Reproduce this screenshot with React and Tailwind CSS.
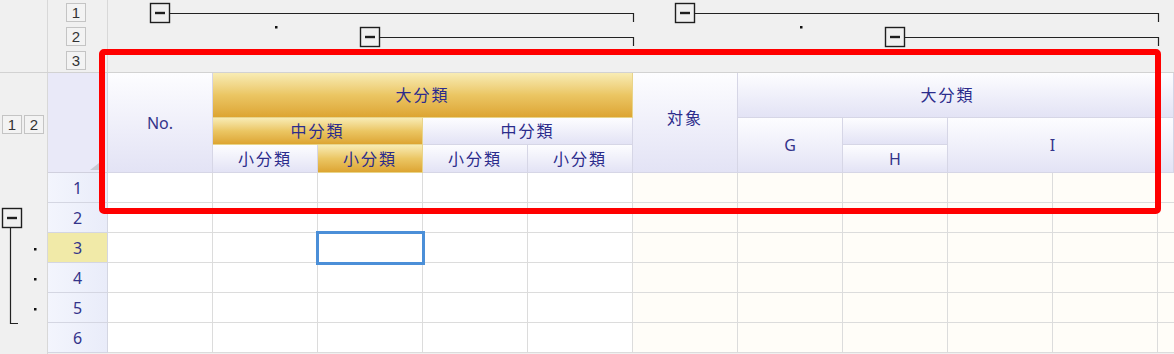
const font = { fontFamily: '"Noto Sans", "Noto Sans CJK JP", sans-serif' };

const lav = "bg-linear-to-b from-[#fdfdff] to-[#e3e3f5]";
const gold = "bg-linear-to-b from-[#f8ecb4] via-[#ebc663] to-[#dda531]";
const jp = "text-[16px] tracking-[2px] text-[#2c2c8c]";
const latin = "text-[16px] text-[#34348a]";

const LevelButton = ({ n }) => (
  <div className="w-[20px] h-[19px] border border-[#c4c4c4] bg-[#f3f3f3] flex items-center justify-center text-[15px] text-[#333] leading-none font-['Liberation_Sans']">
    {n}
  </div>
);

const MinusBox = ({ x, y }) => (
  <g>
    <rect x={x + 0.5} y={y + 0.5} width="19" height="19" fill="none" stroke="#1e1e1e" strokeWidth="1.4" />
    <line x1={x + 5} y1={y + 10} x2={x + 15} y2={y + 10} stroke="#1e1e1e" strokeWidth="2.4" />
  </g>
);

const ColumnOutline = () => (
  <svg width="1066" height="72" className="block">
    <MinusBox x={42} y={3} />
    <path d="M62 13.5 H525.5 V22" fill="none" stroke="#222" strokeWidth="1.2" />
    <rect x="167" y="26" width="2.5" height="2.5" fill="#111" />
    <MinusBox x={252} y={27} />
    <path d="M272 37.5 H525.5 V46" fill="none" stroke="#222" strokeWidth="1.2" />
    <MinusBox x={567} y={3} />
    <path d="M587 13.5 H1050.5 V22" fill="none" stroke="#222" strokeWidth="1.2" />
    <rect x="692" y="26" width="2.5" height="2.5" fill="#111" />
    <MinusBox x={777} y={27} />
    <path d="M797 37.5 H1050.5 V46" fill="none" stroke="#222" strokeWidth="1.2" />
  </svg>
);

const RowOutline = () => (
  <svg width="47" height="181" className="block">
    <MinusBox x={2} y={35} />
    <path d="M10.5 55 V150.5 H18" fill="none" stroke="#222" strokeWidth="1.2" />
    <rect x="34" y="75" width="2.5" height="2.5" fill="#111" />
    <rect x="34" y="105" width="2.5" height="2.5" fill="#111" />
    <rect x="34" y="135" width="2.5" height="2.5" fill="#111" />
  </svg>
);

const Head = ({ className, children }) => (
  <div className={`flex items-center justify-center border-r border-b border-[#d6d6e6] ${className}`}>
    {children}
  </div>
);

const rows = [1, 2, 3, 4, 5, 6];
const cols = [0, 1, 2, 3, 4, 5, 6, 7, 8, 9];

export default function App() {
  return (
    <div className="relative w-[1174px] h-[354px] overflow-hidden bg-[#f0f0f0]" style={font}>
      {/* column outline band */}
      <div className="flex h-[73px] border-b border-[#d2d2d2]">
        <div className="w-[48px] border-r border-[#d8d8d8]" />
        <div className="w-[60px] border-r border-[#d8d8d8] flex flex-col gap-[5px] pt-[3px] pl-[18px]">
          <LevelButton n="1" />
          <LevelButton n="2" />
          <LevelButton n="3" />
        </div>
        <ColumnOutline />
      </div>

      <div className="flex">
        {/* row outline */}
        <div className="w-[48px] border-r border-[#d8d8d8] flex flex-col">
          <div className="h-[100px] flex gap-[2px] pl-[2px] pt-[42px]">
            <LevelButton n="1" />
            <LevelButton n="2" />
          </div>
          <RowOutline />
        </div>

        <div className="flex-1 flex flex-col">
          {/* header */}
          <div className="flex h-[100px]">
            <div className="relative w-[60px] bg-[#e9e9f8] border-r border-b border-[#d0d0de]">
              <div className="absolute right-[8px] bottom-[2px] w-0 h-0 border-l-[9px] border-l-transparent border-b-[7px] border-b-[#c9c9d3]" />
            </div>
            <div className="flex-1 grid grid-cols-[repeat(10,105px)_1fr] grid-rows-[45px_27px_28px]">
              <Head className={`col-start-1 row-start-1 row-span-3 ${lav}`}>
                <span className={latin}>No.</span>
              </Head>
              <Head className={`col-start-2 col-span-4 row-start-1 border-[#e8d48a] ${gold}`}>
                <span className={jp}>大分類</span>
              </Head>
              <Head className={`col-start-2 col-span-2 row-start-2 border-[#e8d48a] ${gold}`}>
                <span className={jp}>中分類</span>
              </Head>
              <Head className={`col-start-4 col-span-2 row-start-2 ${lav}`}>
                <span className={jp}>中分類</span>
              </Head>
              <Head className={`col-start-2 row-start-3 ${lav}`}>
                <span className={jp}>小分類</span>
              </Head>
              <Head className={`col-start-3 row-start-3 border-[#e8d48a] ${gold}`}>
                <span className={jp}>小分類</span>
              </Head>
              <Head className={`col-start-4 row-start-3 ${lav}`}>
                <span className={jp}>小分類</span>
              </Head>
              <Head className={`col-start-5 row-start-3 ${lav}`}>
                <span className={jp}>小分類</span>
              </Head>
              <Head className={`col-start-6 row-start-1 row-span-3 items-start pt-[33px] ${lav}`}>
                <span className={jp}>対象</span>
              </Head>
              <Head className={`col-start-7 col-span-4 row-start-1 ${lav}`}>
                <span className={jp}>大分類</span>
              </Head>
              <Head className={`col-start-7 row-start-2 row-span-2 ${lav}`}>
                <span className={latin}>G</span>
              </Head>
              <Head className={`col-start-8 row-start-2 ${lav}`} />
              <Head className={`col-start-8 row-start-3 ${lav}`}>
                <span className={latin}>H</span>
              </Head>
              <Head className={`col-start-9 col-span-2 row-start-2 row-span-2 ${lav}`}>
                <span className={latin}>I</span>
              </Head>
              <Head className={`col-start-11 row-start-1 ${lav}`} />
              <Head className={`col-start-11 row-start-2 row-span-2 ${lav}`} />
            </div>
          </div>

          {/* data rows */}
          {rows.map((r) => (
            <div key={r} className={`flex h-[30px] ${r === 3 ? "relative z-10" : ""}`}>
              <div
                className={`w-[60px] flex items-center justify-center border-r border-b border-[#d4d6e2] text-[16px] text-[#34348a] ${
                  r === 3 ? "bg-[#f1eaa8]" : "bg-linear-to-r from-[#f3f5fd] to-[#e9ecf9]"
                }`}
              >
                {r}
              </div>
              {cols.map((c) => (
                <div
                  key={c}
                  className={`w-[105px] border-r border-b border-[#dcdcdc] ${c >= 5 ? "bg-[#fffdf8]" : "bg-white"} ${
                    r === 3 && c === 2 ? "relative z-10 outline-[3px] -outline-offset-1 outline-[#4b8fd8]" : ""
                  }`}
                />
              ))}
              <div className="flex-1 border-b border-[#dcdcdc] bg-[#fffdf8]" />
            </div>
          ))}
        </div>
      </div>

      {/* annotation */}
      <div className="absolute left-[99px] top-[49px] w-[1062px] h-[165px] border-[6px] border-[#ff0000] rounded-[5px] pointer-events-none" />
    </div>
  );
}
